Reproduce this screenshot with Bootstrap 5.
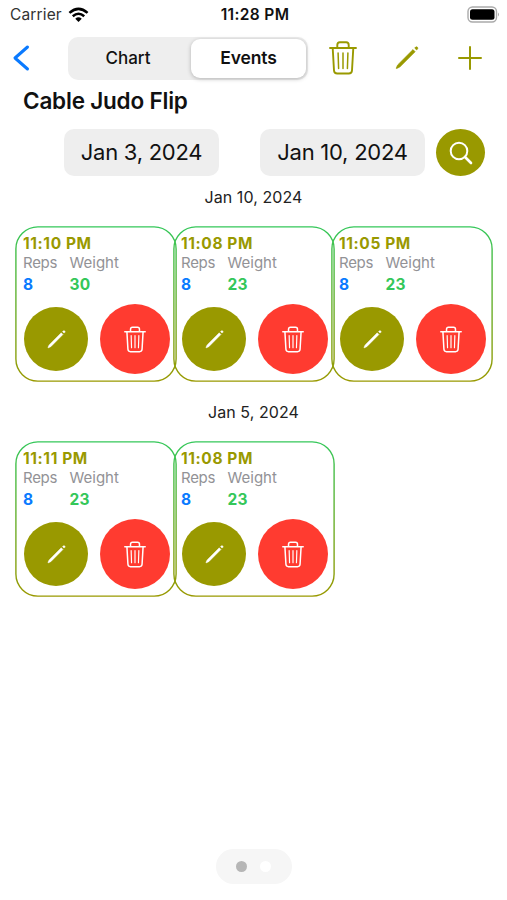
<!DOCTYPE html>
<html lang="en">
<head>
<meta charset="utf-8">
<meta name="viewport" content="width=device-width, initial-scale=1">
<title>Cable Judo Flip</title>
<link href="https://cdn.jsdelivr.net/npm/bootstrap@5.3.0/dist/css/bootstrap.min.css" rel="stylesheet">
<style>
  body { font-family: Inter, "Liberation Sans", sans-serif; color: #111; background: #fff; overflow: hidden; }
  .screen { width: 507px; height: 900px; }
  .statusbar { height: 30px; padding: 0 7px 0 10px; font-size: 15.5px; line-height: 30px; }
  .statusbar > div { flex: 1 1 0; }
  .carrier { color: #333; letter-spacing: .15px; }
  .clock { font-weight: 600; letter-spacing: .35px; }
  .toolbar { height: 56px; padding: 0 0 0 12px; }
  .segments { width: 240px; height: 43px; margin-left: 37px; padding: 2px; background: #eee; border-radius: 10px; }
  .segments .btn { --bs-btn-border-width: 0; width: 121px; height: 39px; padding: 0 5px 0 0; font-size: 17px; line-height: 39px; border-radius: 9px; color: #111; font-weight: 500; letter-spacing: .05px; }
  .segments .btn.picked { width: 115px; padding: 0; font-size: 17.5px; background: #fff; font-weight: 600; box-shadow: 0 1px 4px rgba(0,0,0,.25); letter-spacing: -.15px; line-height: 38px; }
  .olive { color: #999900; }
  .tools { margin-left: 21px; }
  .tools svg { display: block; }
  .heading { height: 30px; padding-left: 23px; font-size: 22.5px; line-height: 30px; font-weight: 600; letter-spacing: -.2px; margin: 0; }
  .range { height: 47px; margin-top: 13px; padding-left: 64px; }
  .datebox { height: 47px; line-height: 47px; background: #eee; border-radius: 10px; font-size: 22px; letter-spacing: -.25px; text-align: center; }
  .search { width: 49px; height: 47px; border-radius: 50%; background: #999900; margin-left: 11px; }
  .day { height: 20px; line-height: 20px; font-size: 16px; font-weight: 400; letter-spacing: .08px; text-align: center; color: #222; margin: 0; }
  .entries { padding-left: 15px; margin-top: 19px; }
  .entry { position: relative; width: 162px; height: 156px; margin-right: -4px; padding: 8px 7px 0 8px; }
  .outline { position: absolute; left: 0; top: 0; }
  .time { font-size: 15.5px; line-height: 19px; font-weight: 700; color: #999900; letter-spacing: .6px; }
  .label { font-size: 15px; line-height: 19px; color: #929296; }
  .label .reps { letter-spacing: -.3px; }
  .value { font-size: 15.5px; line-height: 25px; font-weight: 700; letter-spacing: .3px; }
  .reps { width: 46.5px; }
  .blue { color: #0a7aff; } .green { color: #34c759; }
  .actions { margin-top: 7px; }
  .round { border: 0; padding: 0; border-radius: 50%; color: #fff; }
  .round svg { display: block; }
  .edit { width: 64px; height: 64px; background: #999900; margin-left: 1px; }
  .remove { width: 70px; height: 70px; background: #ff3b30; }
  .pager { width: 76px; height: 35px; border-radius: 18px; background: #f6f6f6; margin: auto auto 16px 216px; gap: 13px; padding-right: 1px; }
  .pager span { width: 11px; height: 11px; border-radius: 50%; background: #fff; }
  .pager .now { background: #b6b6b6; }
</style>
<script src="https://cdn.jsdelivr.net/npm/bootstrap@5.3.0/dist/js/bootstrap.bundle.min.js"></script>
</head>
<body>
<svg class="position-absolute" width="0" height="0">
  <defs><linearGradient id="edge" x1="0" y1="0" x2="0" y2="1"><stop stop-color="#34c759"/><stop offset="1" stop-color="#999900"/></linearGradient></defs>
  <symbol id="trash" viewBox="0 0 28 34">
    <g fill="none" stroke="currentColor" stroke-width="1.900" stroke-linecap="round" stroke-linejoin="round">
      <path d="M1 7H27M8.300 7V4Q8.300 1.300 10.800 1.300H17.200Q19.700 1.300 19.700 4V7M3.700 7L5 29.500Q5.200 32.500 8.200 32.500H19.800Q22.800 32.500 23 29.500L24.300 7"/>
      <path stroke-width="1.500" d="M9.100 12L9.600 27.500M14 12V27.500M18.900 12L18.400 27.500"/>
    </g>
  </symbol>
  <symbol id="pencil" viewBox="0 0 24 24">
    <path fill="currentColor" stroke="currentColor" stroke-width=".7" stroke-linejoin="round" d="M18 3.600L20.100 5.700L4.800 21L1.800 22.400Q1 22.700 1.300 21.900L2.700 18.900ZM19.700 2.100L20.700 1.100Q21.500.5 22.400 1.200Q23.200 2 22.600 2.900L21.600 3.900Z"/>
  </symbol>
</svg>
<main class="screen d-flex flex-column">
  <header class="statusbar d-flex">
    <div class="carrier d-flex align-items-center">Carrier
      <svg style="margin-left:6px" width="21" height="16" viewBox="0 0 22 16"><g fill="none" stroke="#000" stroke-width="2.700"><path d="M1.500 5.800Q11-2.600 20.500 5.800M5 9.300Q11 4.100 17 9.300"/></g><path d="M7.600 11.900Q11 9 14.400 11.900L11 15.300Z"/></svg>
    </div>
    <div class="clock text-center">11:28 PM</div>
    <div class="d-flex justify-content-end align-items-center">
      <svg width="33" height="18" viewBox="0 0 33 18"><rect x="1" y="1" width="28.500" height="15" rx="4.500" fill="#fff" stroke="#aaa" stroke-width="1.400"/><rect x="3" y="3.200" width="24.500" height="10.600" rx="2.500"/><path d="M31 6.500Q33 8.500 31 10.500Z" fill="#aaa"/></svg>
    </div>
  </header>
  <nav class="toolbar d-flex align-items-center">
    <svg width="19" height="28" viewBox="0 0 19 28" fill="none" stroke="#0a7aff" stroke-width="3" stroke-linecap="round" stroke-linejoin="round"><path d="M15.500 3L3 14L15.500 25"/></svg>
    <div class="segments d-flex">
      <button class="btn">Chart</button><button class="btn picked">Events</button>
    </div>
    <div class="tools olive d-flex align-items-center">
      <svg width="28" height="34"><use href="#trash"/></svg>
      <svg width="24" height="24" style="margin-left:38px"><use href="#pencil"/></svg>
      <svg width="24" height="24" style="margin-left:39px" viewBox="0 0 24 24" stroke="currentColor" stroke-width="2" stroke-linecap="round"><path d="M12 1V23M1 12H23"/></svg>
    </div>
  </nav>
  <h1 class="heading">Cable Judo Flip</h1>
  <div class="range d-flex">
    <div class="datebox" style="width:155px">Jan 3, 2024</div>
    <div class="datebox" style="width:165px;margin-left:41px">Jan 10, 2024</div>
    <button class="round search d-flex align-items-center justify-content-center" aria-label="Search">
      <svg width="24" height="24" viewBox="0 0 24 24" fill="none" stroke="#fff" stroke-linecap="round"><circle cx="10" cy="10" r="8.300" stroke-width="2"/><path d="M16 16L22 22" stroke-width="2.600"/></svg>
    </button>
  </div>
  <h2 class="day" style="margin-top:11px">Jan 10, 2024</h2>
  <section class="entries d-flex" id="day-10"></section>
  <h2 class="day" style="margin-top:20px">Jan 5, 2024</h2>
  <section class="entries d-flex" id="day-5"></section>
  <div class="pager d-flex align-items-center justify-content-center"><span class="now"></span><span></span></div>
</main>
<script>
  const entry = ([time, reps, weight]) => `
    <article class="entry">
      <svg class="outline" width="162" height="156"><rect x=".9" y=".9" width="160.200" height="154.200" rx="22" fill="none" stroke="url(#edge)" stroke-width="1.400"/></svg>
      <div class="time">${time}</div>
      <div class="label d-flex"><span class="reps">Reps</span><span>Weight</span></div>
      <div class="value d-flex"><span class="reps blue">${reps}</span><span class="green">${weight}</span></div>
      <div class="actions d-flex align-items-center justify-content-between">
        <button class="round edit d-flex align-items-center justify-content-center" aria-label="Edit"><svg width="19" height="19"><use href="#pencil"/></svg></button>
        <button class="round remove d-flex align-items-center justify-content-center" aria-label="Delete"><svg width="22" height="27"><use href="#trash"/></svg></button>
      </div>
    </article>`;
  document.getElementById('day-10').innerHTML = [['11:10 PM', 8, 30], ['11:08 PM', 8, 23], ['11:05 PM', 8, 23]].map(entry).join('');
  document.getElementById('day-5').innerHTML = [['11:11 PM', 8, 23], ['11:08 PM', 8, 23]].map(entry).join('');
</script>
</body>
</html>
